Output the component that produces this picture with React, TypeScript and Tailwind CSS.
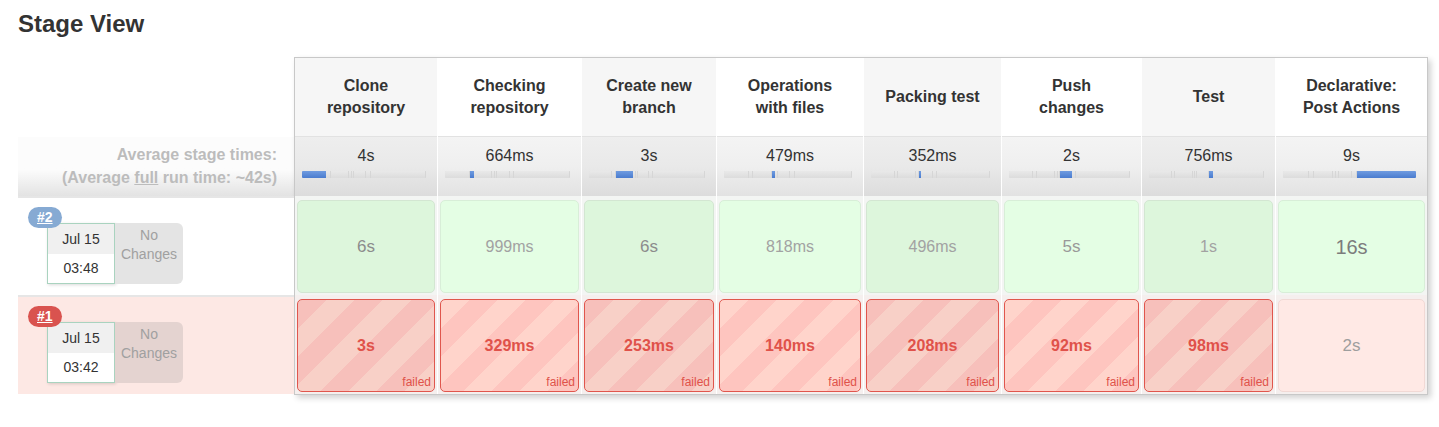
import React from 'react';

type Stage = {
  name: string[];
  width: string;
  avg: string;
  odd: boolean;
};

const stages: Stage[] = [
  { name: ['Clone', 'repository'], width: 'w-[143px]', avg: '4s', odd: true },
  { name: ['Checking', 'repository'], width: 'w-[144px]', avg: '664ms', odd: false },
  { name: ['Create new', 'branch'], width: 'w-[135px]', avg: '3s', odd: true },
  { name: ['Operations', 'with files'], width: 'w-[147px]', avg: '479ms', odd: false },
  { name: ['Packing test'], width: 'w-[138px]', avg: '352ms', odd: true },
  { name: ['Push', 'changes'], width: 'w-[140px]', avg: '2s', odd: false },
  { name: ['Test'], width: 'w-[134px]', avg: '756ms', odd: true },
  { name: ['Declarative:', 'Post Actions'], width: 'w-[151px]', avg: '9s', odd: false },
];

// average durations in seconds, used for the little stacked bars
const avgSeconds = [4, 0.664, 3, 0.479, 0.352, 2, 0.756, 9];
const total = avgSeconds.reduce((a, b) => a + b, 0);

const successRow = [
  { text: '6s', cls: 'text-[17px] text-[#8c8c8c]' },
  { text: '999ms', cls: 'text-[16px] text-[#a2a2a2]' },
  { text: '6s', cls: 'text-[17px] text-[#8c8c8c]' },
  { text: '818ms', cls: 'text-[16px] text-[#a2a2a2]' },
  { text: '496ms', cls: 'text-[16px] text-[#a2a2a2]' },
  { text: '5s', cls: 'text-[17px] text-[#999]' },
  { text: '1s', cls: 'text-[16px] text-[#a2a2a2]' },
  { text: '16s', cls: 'text-[20px] text-[#7c7c7c]' },
];

const failedRow = ['3s', '329ms', '253ms', '140ms', '208ms', '92ms', '98ms', '2s'];

const StageBar = ({ active }: { active: number }) => (
  <div className="mt-[5px] ml-[7px] mr-[11px] h-[7px] flex overflow-hidden rounded-[1px] shadow-[inset_0_1px_2px_rgba(0,0,0,0.08)]">
    {avgSeconds.map((s, i) => (
      <div
        key={i}
        style={{ width: `${(s / total) * 100}%` }}
        className={
          i === active
            ? 'h-full bg-linear-to-b from-[#6f9be0] to-[#4a7ccf]'
            : 'h-full border-r border-[#d6d6d6] bg-linear-to-b from-[#e9e9e9] to-[#dcdcdc]'
        }
      />
    ))}
  </div>
);

const BuildInfo = ({ num, date, time, failed }: { num: string; date: string; time: string; failed: boolean }) => (
  <div
    className={`relative h-[99px] border-t-2 border-[#e6e6e6] pl-[29px] pt-[25px] ${
      failed ? 'bg-[#fde8e4]' : 'bg-white'
    }`}
  >
    <span
      className={`absolute left-[10px] top-[9px] z-10 h-[21px] px-[9px] rounded-full text-white font-bold text-[14px] leading-[21px] underline ${
        failed ? 'bg-[#d9534f]' : 'bg-[#86aad3]'
      }`}
    >
      {num}
    </span>
    <div className="flex">
      <div className="w-[68px] h-[61px] border border-[#a9d3bf] shadow-[1px_1px_3px_rgba(0,0,0,0.15)] flex flex-col">
        <div className="h-[30px] bg-[#f0f0f0] flex items-center justify-center text-[14px] text-[#333]">{date}</div>
        <div className="flex-1 bg-white flex items-center justify-center text-[14px] text-[#333]">{time}</div>
      </div>
      <div
        className={`w-[68px] h-[61px] rounded-r-[6px] pt-[3px] text-center text-[14px] leading-[19px] text-[#a0a0a0] ${
          failed ? 'bg-[#e4d3d0]' : 'bg-[#e4e4e4]'
        }`}
      >
        No
        <br />
        Changes
      </div>
    </div>
  </div>
);

export default function App() {
  return (
    <div className="min-h-screen bg-white pl-[18px] font-['Liberation_Sans',Arial,sans-serif]">
      <h1 className="pt-[10px] text-[24px] leading-[28px] font-bold text-[#333]">Stage View</h1>

      <div className="mt-[19px] flex">
        {/* left: labels and build info */}
        <div className="w-[276px] flex flex-col">
          <div className="h-[80px]" />
          <div className="h-[59px] pr-[17px] pt-[6px] text-right font-bold text-[16px] leading-[23px] text-[#bcbcbc] bg-linear-to-b from-[#fcfcfc] from-55% to-[#e3e3e3]">
            Average stage times:
            <br />
            (Average <span className="underline">full</span> run time: ~42s)
          </div>
          <BuildInfo num="#2" date="Jul 15" time="03:48" failed={false} />
          <BuildInfo num="#1" date="Jul 15" time="03:42" failed={true} />
        </div>

        {/* stage table */}
        <div className="border border-[#c8c8c8] shadow-[3px_3px_6px_rgba(0,0,0,0.18)] flex">
          {stages.map((st, i) => {
            const last = i === stages.length - 1;
            const ok = successRow[i];
            return (
              <div key={i} className={`${st.width} flex flex-col ${last ? '' : 'border-r border-white'}`}>
                <div
                  className={`h-[78px] px-2 flex flex-col items-center justify-center text-center font-bold text-[16px] leading-[22px] text-[#333] ${
                    st.odd ? 'bg-[#f6f6f6]' : 'bg-white'
                  }`}
                >
                  {st.name.map((n) => (
                    <span key={n}>{n}</span>
                  ))}
                </div>
                <div
                  className={`h-[60px] border-t border-[#e2e2e2] pt-[9px] bg-linear-to-b ${
                    st.odd ? 'from-[#eeeeee] via-[#e9e9e9] to-[#dcdcdc]' : 'from-[#f4f4f4] via-[#efefef] to-[#e2e2e2]'
                  }`}
                >
                  <div className="text-center text-[16px] leading-[20px] text-[#333]">{st.avg}</div>
                  <StageBar active={i} />
                </div>

                {/* build #2 */}
                <div className="h-[99px] px-[2px] pt-[4px] pb-[2px] bg-[#f3f5f3]">
                  <div
                    className={`h-full rounded-[5px] border flex items-center justify-center ${
                      st.odd ? 'bg-[#ddf6dc] border-[#d3e6d2]' : 'bg-[#e4fee4] border-[#d8eed8]'
                    }`}
                  >
                    <span className={ok.cls}>{ok.text}</span>
                  </div>
                </div>

                {/* build #1 */}
                <div className="h-[99px] px-[2px] pt-[4px] pb-[2px] bg-[#f5efee]">
                  {last ? (
                    <div className="h-full rounded-[5px] border border-[#f1d9d5] bg-[#ffe9e5] flex items-center justify-center">
                      <span className="text-[17px] text-[#9e9e9e]">{failedRow[i]}</span>
                    </div>
                  ) : (
                    <div
                      className={`relative h-full rounded-[5px] border-[1.5px] border-[#e0564d] flex items-center justify-center ${
                        st.odd
                          ? 'bg-[repeating-linear-gradient(135deg,#f7c0bb_0px,#f7c0bb_20px,#f8d0c7_20px,#f8d0c7_40px)]'
                          : 'bg-[repeating-linear-gradient(135deg,#ffd4cb_0px,#ffd4cb_20px,#fec5bf_20px,#fec5bf_40px)]'
                      }`}
                    >
                      <span className="font-bold text-[16px] text-[#e0524a]">{failedRow[i]}</span>
                      <span className="absolute right-[3px] bottom-[2px] text-[12px] leading-[14px] text-[#e0524a]">
                        failed
                      </span>
                    </div>
                  )}
                </div>
              </div>
            );
          })}
        </div>
      </div>
    </div>
  );
}
